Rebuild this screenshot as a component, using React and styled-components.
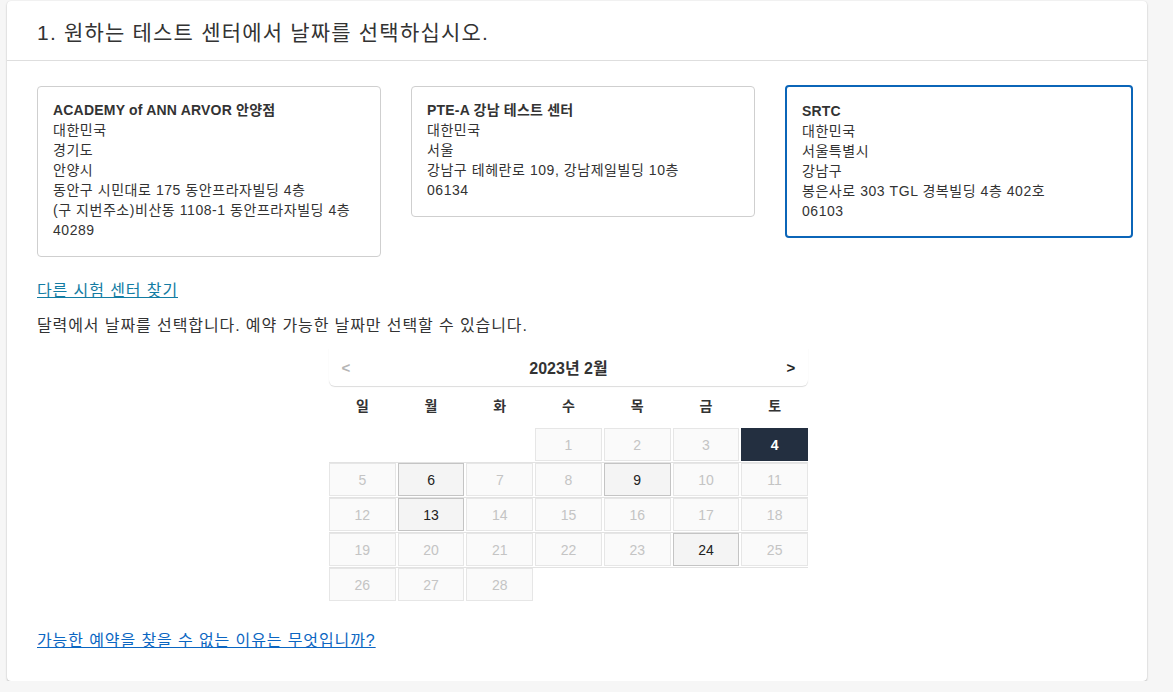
import React from "react";
import styled, { createGlobalStyle } from "styled-components";

const GlobalStyle = createGlobalStyle`
  body {
    margin: 0;
    background: #f6f6f6;
    font-family: "Liberation Sans", Arial, "Noto Sans CJK KR", sans-serif;
    color: #333;
  }
`;

const Panel = styled.div`
  width: 1140px;
  margin: 1px 0 0 7px;
  background: #fff;
  border-radius: 4px;
  box-shadow: 0 1px 2px rgba(0, 0, 0, 0.25), 0 0 1px rgba(0, 0, 0, 0.08);
`;

const Header = styled.div`
  height: 59px;
  padding: 0 30px;
  display: flex;
  align-items: center;
  border-bottom: 1px solid #dedede;
  font-size: 21px;
  letter-spacing: 1.2px;
  color: #333;
`;

const Body = styled.div`
  padding: 25px 14px 29px 30px;
`;

const Centers = styled.div`
  display: grid;
  grid-template-columns: 344px 344px 1fr;
  column-gap: 30px;
  align-items: start;
`;

const CenterCard = styled.div`
  border: ${(p) => (p.$selected ? "2px solid #0b65b8" : "1px solid #cfcfcf")};
  margin-top: ${(p) => (p.$selected ? "-1px" : "0")};
  border-radius: 4px;
  padding: ${(p) => (p.$selected ? "14px 15px 15px" : "13px 15px 16px")};
  font-size: 14px;
  line-height: 20px;
  letter-spacing: 0.55px;
  color: #333;
`;

const CenterName = styled.div`
  font-weight: bold;
  letter-spacing: 0.2px;
`;

const Link = styled.a`
  display: inline-block;
  font-size: 16px;
  line-height: 22px;
  letter-spacing: 0.9px;
  color: ${(p) => p.$color || "#0b66c2"};
  text-decoration: underline;
  cursor: pointer;
`;

const FindLink = styled(Link)`
  margin-top: 23px;
`;

const Hint = styled.p`
  margin: 13px 0 0;
  font-size: 16px;
  line-height: 22px;
  letter-spacing: 0.9px;
  color: #333;
`;

const Calendar = styled.div`
  width: 479px;
  margin: 11px 0 0 292px;
`;

const CalHeader = styled.div`
  height: 38px;
  display: flex;
  align-items: center;
  justify-content: space-between;
  padding: 0 7px;
  border-radius: 0 0 6px 6px;
  box-shadow: 0 1px 1px rgba(0, 0, 0, 0.14);
`;

const NavButton = styled.span`
  font-size: 15px;
  font-weight: bold;
  color: ${(p) => (p.$disabled ? "#b5b5b5" : "#222")};
  width: 20px;
  text-align: center;
  cursor: pointer;
`;

const MonthTitle = styled.div`
  font-size: 16px;
  font-weight: bold;
  color: #333;
`;

const Weekdays = styled.div`
  display: grid;
  grid-template-columns: repeat(7, 1fr);
  column-gap: 2px;
  height: 38px;
  align-items: center;
  margin-bottom: 4px;
`;

const Weekday = styled.div`
  text-align: center;
  font-size: 14px;
  font-weight: bold;
  color: #333;
`;

const Week = styled.div`
  display: grid;
  grid-template-columns: repeat(7, 1fr);
  column-gap: 2px;
  padding-bottom: 1px;
  border-bottom: ${(p) => (p.$last ? "none" : "1px solid #e2e2e2")};
`;

const Day = styled.div`
  height: 31px;
  display: flex;
  align-items: center;
  justify-content: center;
  font-size: 14px;
  border: 1px solid
    ${(p) => (p.$state === "open" ? "#c4c4c4" : p.$state === "selected" ? "#232f40" : "#e6e6e6")};
  background: ${(p) =>
    p.$state === "open" ? "#f4f4f4" : p.$state === "selected" ? "#232f40" : "#fafafa"};
  color: ${(p) => (p.$state === "open" ? "#222" : p.$state === "selected" ? "#fff" : "#c4c4c4")};
  font-weight: ${(p) => (p.$state === "selected" ? "bold" : "normal")};
  cursor: ${(p) => (p.$state === "disabled" ? "default" : "pointer")};
`;

const Blank = styled.div`
  height: 33px;
`;

const WhyLink = styled(Link)`
  margin-top: 28px;
`;

const centers = [
  {
    name: "ACADEMY of ANN ARVOR 안양점",
    lines: ["대한민국", "경기도", "안양시", "동안구 시민대로 175 동안프라자빌딩 4층", "(구 지번주소)비산동 1108-1 동안프라자빌딩 4층", "40289"],
  },
  {
    name: "PTE-A 강남 테스트 센터",
    lines: ["대한민국", "서울", "강남구 테헤란로 109, 강남제일빌딩 10층", "06134"],
  },
  {
    name: "SRTC",
    lines: ["대한민국", "서울특별시", "강남구", "봉은사로 303 TGL 경복빌딩 4층 402호", "06103"],
    selected: true,
  },
];

const weekdays = ["일", "월", "화", "수", "목", "금", "토"];
const openDays = [6, 9, 13, 24];
const selectedDay = 4;

// Feb 2023 starts on Wednesday
const weeks = [];
let week = [null, null, null];
for (let d = 1; d <= 28; d++) {
  week.push(d);
  if (week.length === 7) {
    weeks.push(week);
    week = [];
  }
}
if (week.length) {
  while (week.length < 7) week.push(null);
  weeks.push(week);
}

const dayState = (d) => {
  if (d === selectedDay) return "selected";
  if (openDays.includes(d)) return "open";
  return "disabled";
};

const App = () => {
  return (
    <>
      <GlobalStyle />
      <Panel>
        <Header>1. 원하는 테스트 센터에서 날짜를 선택하십시오.</Header>
        <Body>
          <Centers>
            {centers.map((c) => (
              <CenterCard key={c.name} $selected={c.selected}>
                <CenterName>{c.name}</CenterName>
                {c.lines.map((l, i) => (
                  <div key={i}>{l}</div>
                ))}
              </CenterCard>
            ))}
          </Centers>
          <div>
            <FindLink $color="#137ca3">다른 시험 센터 찾기</FindLink>
          </div>
          <Hint>달력에서 날짜를 선택합니다. 예약 가능한 날짜만 선택할 수 있습니다.</Hint>
          <Calendar>
            <CalHeader>
              <NavButton $disabled>&lt;</NavButton>
              <MonthTitle>2023년 2월</MonthTitle>
              <NavButton>&gt;</NavButton>
            </CalHeader>
            <Weekdays>
              {weekdays.map((w) => (
                <Weekday key={w}>{w}</Weekday>
              ))}
            </Weekdays>
            {weeks.map((wk, i) => (
              <Week key={i} $last={i === weeks.length - 1}>
                {wk.map((d, j) =>
                  d ? (
                    <Day key={j} $state={dayState(d)}>
                      {d}
                    </Day>
                  ) : (
                    <Blank key={j} />
                  )
                )}
              </Week>
            ))}
          </Calendar>
          <div>
            <WhyLink>가능한 예약을 찾을 수 없는 이유는 무엇입니까?</WhyLink>
          </div>
        </Body>
      </Panel>
    </>
  );
};

export default App;
